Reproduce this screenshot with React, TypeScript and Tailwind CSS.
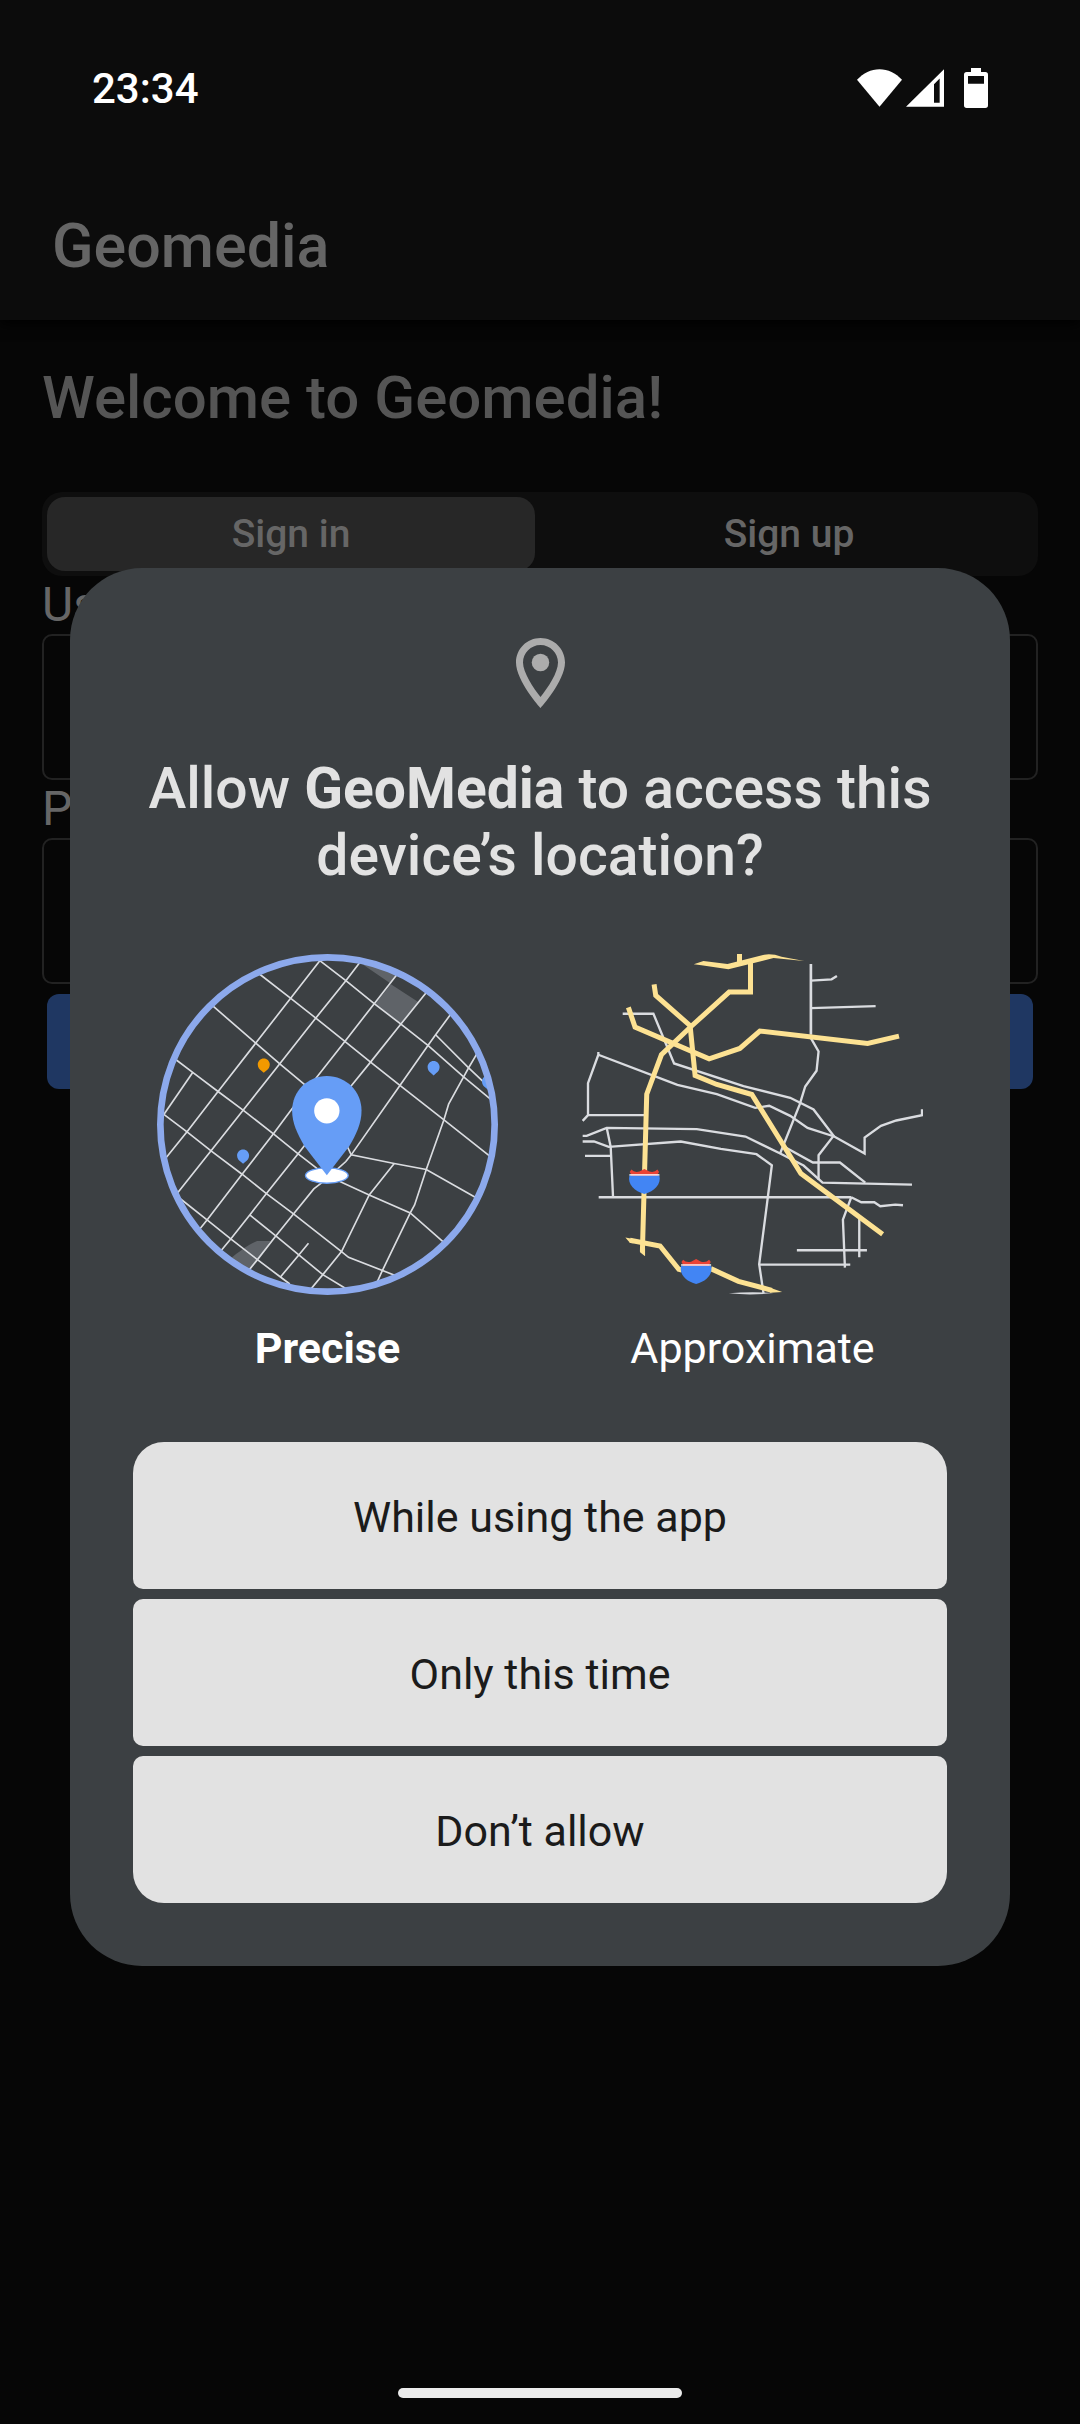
import React from "react";

function WifiIcon() {
  return (
    <svg viewBox="54 55 135 113" className="h-[38px] w-[45px]" fill="#fff" aria-hidden="true">
      <path d="M54 87C73 66 96 55 121.500 55S170 66 189 87L121.500 168Z" />
    </svg>
  );
}

function SignalIcon() {
  return (
    <svg viewBox="201 57 114 113" className="h-[38px] w-[38px]" fill="#fff" fillRule="evenodd" aria-hidden="true">
      <path d="M201 170 315 57V170ZM285 102V158H302V85Z" />
    </svg>
  );
}

function BatteryIcon() {
  return (
    <svg viewBox="372 54 72 120" className="h-[40px] w-[24px]" fill="#fff" fillRule="evenodd" aria-hidden="true">
      <path d="M393 54H423V66H436Q444 66 444 74V166Q444 174 436 174H380Q372 174 372 166V74Q372 66 380 66H393ZM384 78V101H432V78Z" />
    </svg>
  );
}

function LocationIcon() {
  return (
    <svg viewBox="5 2 14 20" className="h-[70px] w-[49px]" fill="#acacac" aria-hidden="true">
      <path d="M12 2C8.130 2 5 5.130 5 9c0 5.250 7 13 7 13s7-7.750 7-13c0-3.870-3.130-7-7-7zM7 9c0-2.760 2.240-5 5-5s5 2.240 5 5c0 2.880-2.880 7.190-5 9.880C9.920 16.210 7 11.850 7 9z" />
      <circle cx="12" cy="9" r="2.500" />
    </svg>
  );
}

const smallPin = "M0-18C10-18 18-10 18 0C18 9 13 14 8 18L0 25L-8 18C-13 14-18 9-18 0C-18-10-10-18 0-18Z";

function PreciseMap() {
  return (
    <svg viewBox="22 28 1022 1022" className="h-[341px] w-[341px]" aria-hidden="true">
      <defs>
        <clipPath id="precise-disc">
          <circle cx="533" cy="539" r="495" />
        </clipPath>
      </defs>
      <g clipPath="url(#precise-disc)">
        <path fill="#5f6368" d="M640 60 720 115 745 80 700 55ZM723 119 805 172 754 238 676 178ZM362 888H322C295 899 268 920 240 942L295 985Z" />
        <g fill="none" stroke="#dadce0" strokeWidth="5">
          <path d="M510 48 318 295 205 440 112 561 40 650" />
          <path d="M640 40 588 108 498 220 390 357 280 496 184 618 75 755" />
          <path d="M750 78 673 177 585 290 500 398 425 494 371 567 277 688 172 825 140 865" />
          <path d="M840 130 753 238 662 352 600 428 466 600 445 627 350 746 300 810 243 882 205 928" />
          <path d="M910 198 857 270 834 302 750 422 604 630 588 650 560 675" />
          <path d="M520 710 492 732 431 807 378 873 323 944 290 985" />
          <path d="M510 48 588 108 673 177 753 238 834 302 941 396 1025 466" />
          <path d="M325 85 422 160 498 220 585 290 662 352 750 422 882 525 1025 638" />
          <path d="M185 180 318 295 390 357 470 424" />
          <path d="M75 342 129 383 205 440 280 496 371 567 445 627 510 677" />
          <path d="M129 383 43 508" />
          <path d="M35 503 112 561 184 618 277 688 350 746 431 807 575 920 596 937 740 993" />
          <path d="M90 760 172 825 243 882 323 944 392 996 420 1017" />
          <path d="M300 810 378 873 447 930 519 989 590 1032" />
          <path d="M476 895 447 930 392 996" />
          <path d="M857 270 956 369 1010 420" />
          <path d="M985 320 956 369 941 396 896 478 882 525 829 674 794 780 781 804 697 978 680 1015" />
          <path d="M590 600 604 630 733 656 829 674 985 762" />
          <path d="M570 710 658 750 781 804 885 895" />
          <path d="M733 656 658 750 575 920 519 989 480 1036" />
        </g>
        <path transform="translate(342 359)" fill="#f29900" d={smallPin} />
        <path transform="translate(851 367)" fill="#669df6" d={smallPin} />
        <path transform="translate(280 632)" fill="#669df6" d={smallPin} />
        <path transform="translate(1014 410)" fill="#669df6" d={smallPin} />
      </g>
      <circle cx="533" cy="539" r="501" fill="none" stroke="#8ca9ec" strokeWidth="20" />
      <ellipse cx="531" cy="692" rx="64" ry="23" fill="#fff" stroke="#669df6" strokeWidth="4" />
      <path fill="#669df6" d="M531 394C589 394 635 440 635 498C635 534 620 568 598 604L531 691L464 604C442 566 427 534 427 498C427 440 473 394 531 394Z" />
      <circle cx="531" cy="498" r="38" fill="#fff" />
    </svg>
  );
}

function Shield({ transform }: { transform: string }) {
  return (
    <g transform={transform}>
      <path fill="#ea4335" d="M-43 0-39-14-44-22-39-29Q-30-19-15-23L0-31 15-23Q30-19 39-29L44-22 39-14 43 0Z" />
      <path fill="#4285f4" d="M-45-11H45C51 16 30 36 0 44C-30 36-51 16-45-11Z" />
      <path stroke="#fff" strokeWidth="4" d="M-45-13H45" />
    </g>
  );
}

function ApproximateMap() {
  return (
    <svg viewBox="36 28 1022 1022" className="h-[341px] w-[341px]" aria-hidden="true">
      <g fill="none" stroke="#dadce0" strokeWidth="7">
        <path strokeWidth="8" d="M722 58V270" />
        <path d="M722 108 784 104 800 94M722 190 916 184" />
        <path d="M722 280 745 320 739 378 705 425 688 480 630 625" />
        <path d="M158 207H250L312 356 520 424 660 459 730 494 790 573 745 631V705" />
        <path d="M85 322V330L54 415V511H224M54 511 38 528" />
        <path d="M85 330 322 420 440 448 555 489 597 483 660 513 712 549 792 575 883 626V578L932 543 978 527 1055 511V493" />
        <path d="M38 573H50L110 549 380 553 526 575 630 626 700 662 757 713 1025 719" />
        <path d="M645 607 728 653H809L885 713" />
        <path d="M38 590H72L116 606 332 590 452 612 559 628 605 661 590 780 567 958 580 1045" />
        <path d="M110 549 122 606 129 756M45 633H122M86 757H843" />
        <path d="M843 757 818 824 824 968M843 757 873 772H912L930 784 975 779 998 781" />
        <path d="M867 820V937M680 916H890M567 959H840" />
      </g>
      <path fill="#dadce0" d="M476 1045Q540 1039 610 1044Q545 1052 476 1045Z" />
      <g fill="none" stroke="#fde293" strokeWidth="15">
        <path d="M508 28V55" />
        <path d="M541 48V142H477L362 246 274 330 230 448 223 700 217 920" />
        <path d="M252 119 257 152 360 243 375 392 440 419 545 449 692 686 937 868" />
        <path d="M175 188 195 247 417 342 509 311 569 259 892 296 986 274" />
        <path d="M180 886 270 903 326 973 335 975M422 971 505 1009 605 1036" />
      </g>
      <path fill="#fde293" d="M371 59 400 49 472 58 582 30Q606 26 634 36L702 49 610 40 475 74 394 62ZM210 910H225V934L210 922ZM166 878 190 882 190 895 180 894ZM600 1028 636 1041 600 1043Z" />
      <Shield transform="translate(223 703)" />
      <Shield transform="translate(378 973)" />
    </svg>
  );
}

function Field({ id, label, type }: { id: string; label: string; type: string }) {
  return (
    <div className="flex flex-col">
      <label htmlFor={id} className="text-[48px] leading-[58px] text-[#666]">
        {label}
      </label>
      <input id={id} type={type} className="h-[146px] w-full rounded-[10px] border-2 border-[#222] bg-transparent px-6 text-[42px] text-[#666]" />
    </div>
  );
}

function PermissionDialog() {
  const choice = "bg-[#e2e2e2] h-[147px] w-full pt-1 text-[43px] text-[#1b1b1b]";
  return (
    <section role="dialog" aria-modal="true" aria-labelledby="permission-title" className="w-full rounded-[72px] bg-[#3c4043] px-[63px] pt-[70px] pb-[63px]">
      <div className="flex flex-col items-center">
        <LocationIcon />
        <h2 id="permission-title" className="mt-[47px] text-center text-[57px] leading-[67px] font-medium text-[#e2e2e2]">
          Allow <b className="font-bold">GeoMedia</b> to access this device’s location?
        </h2>
      </div>
      <div role="radiogroup" aria-label="Location accuracy" className="mt-[65px] flex justify-center gap-[84px] text-[43px] leading-[50px] text-white">
        <label className="flex flex-col items-center gap-7 font-bold">
          <input type="radio" name="accuracy" defaultChecked className="sr-only" />
          <PreciseMap />
          Precise
        </label>
        <label className="flex flex-col items-center gap-7">
          <input type="radio" name="accuracy" className="sr-only" />
          <ApproximateMap />
          Approximate
        </label>
      </div>
      <div className="mt-[69px] flex flex-col gap-2.5">
        <button type="button" className={`${choice} rounded-t-[31px] rounded-b-[10px]`}>While using the app</button>
        <button type="button" className={`${choice} rounded-[10px]`}>Only this time</button>
        <button type="button" className={`${choice} rounded-t-[10px] rounded-b-[31px]`}>Don’t allow</button>
      </div>
    </section>
  );
}

export default function App() {
  return (
    <div className="relative flex min-h-screen flex-col overflow-hidden bg-[#060606] font-[Roboto,sans-serif]">
      <header className="bg-[#0c0c0c] shadow-[0_4px_12px_#000]">
        <div className="flex h-44 items-center justify-between px-[92px] text-white">
          <time className="text-[42px] font-medium">23:34</time>
          <div className="flex items-center">
            <WifiIcon />
            <span className="ml-1"><SignalIcon /></span>
            <span className="ml-5"><BatteryIcon /></span>
          </div>
        </div>
        <div className="flex h-36 items-center px-[52px] pb-1">
          <h1 className="text-[61px] leading-[72px] font-medium text-[#656565]">Geomedia</h1>
        </div>
      </header>
      <main className="flex grow flex-col px-[42px] pt-[42px]">
        <h2 className="text-[60px] leading-[72px] font-medium text-[#555]">Welcome to Geomedia!</h2>
        <div role="tablist" className="mt-[58px] grid grid-cols-2 gap-2.5 rounded-[20px] bg-[#0e0e0e] p-[5px] text-[39px] font-medium text-[#666]">
          <button type="button" role="tab" aria-selected="true" className="h-[74px] rounded-[18px] bg-[#272727]">Sign in</button>
          <button type="button" role="tab" aria-selected="false" className="h-[74px] rounded-[18px]">Sign up</button>
        </div>
        <form className="flex flex-col">
          <Field id="username" label="Username" type="text" />
          <Field id="password" label="Password" type="password" />
          <button type="button" className="mx-[5px] mt-2.5 h-[95px] rounded-[12px] bg-[#1f3762] text-[39px] text-[#666]">Sign in</button>
        </form>
      </main>
      <div className="flex justify-center pb-[26px]">
        <div className="h-2.5 w-[284px] rounded-full bg-[#ebebeb]" />
      </div>
      <div className="absolute inset-0 flex items-start px-[70px] pt-[568px]">
        <PermissionDialog />
      </div>
    </div>
  );
}
